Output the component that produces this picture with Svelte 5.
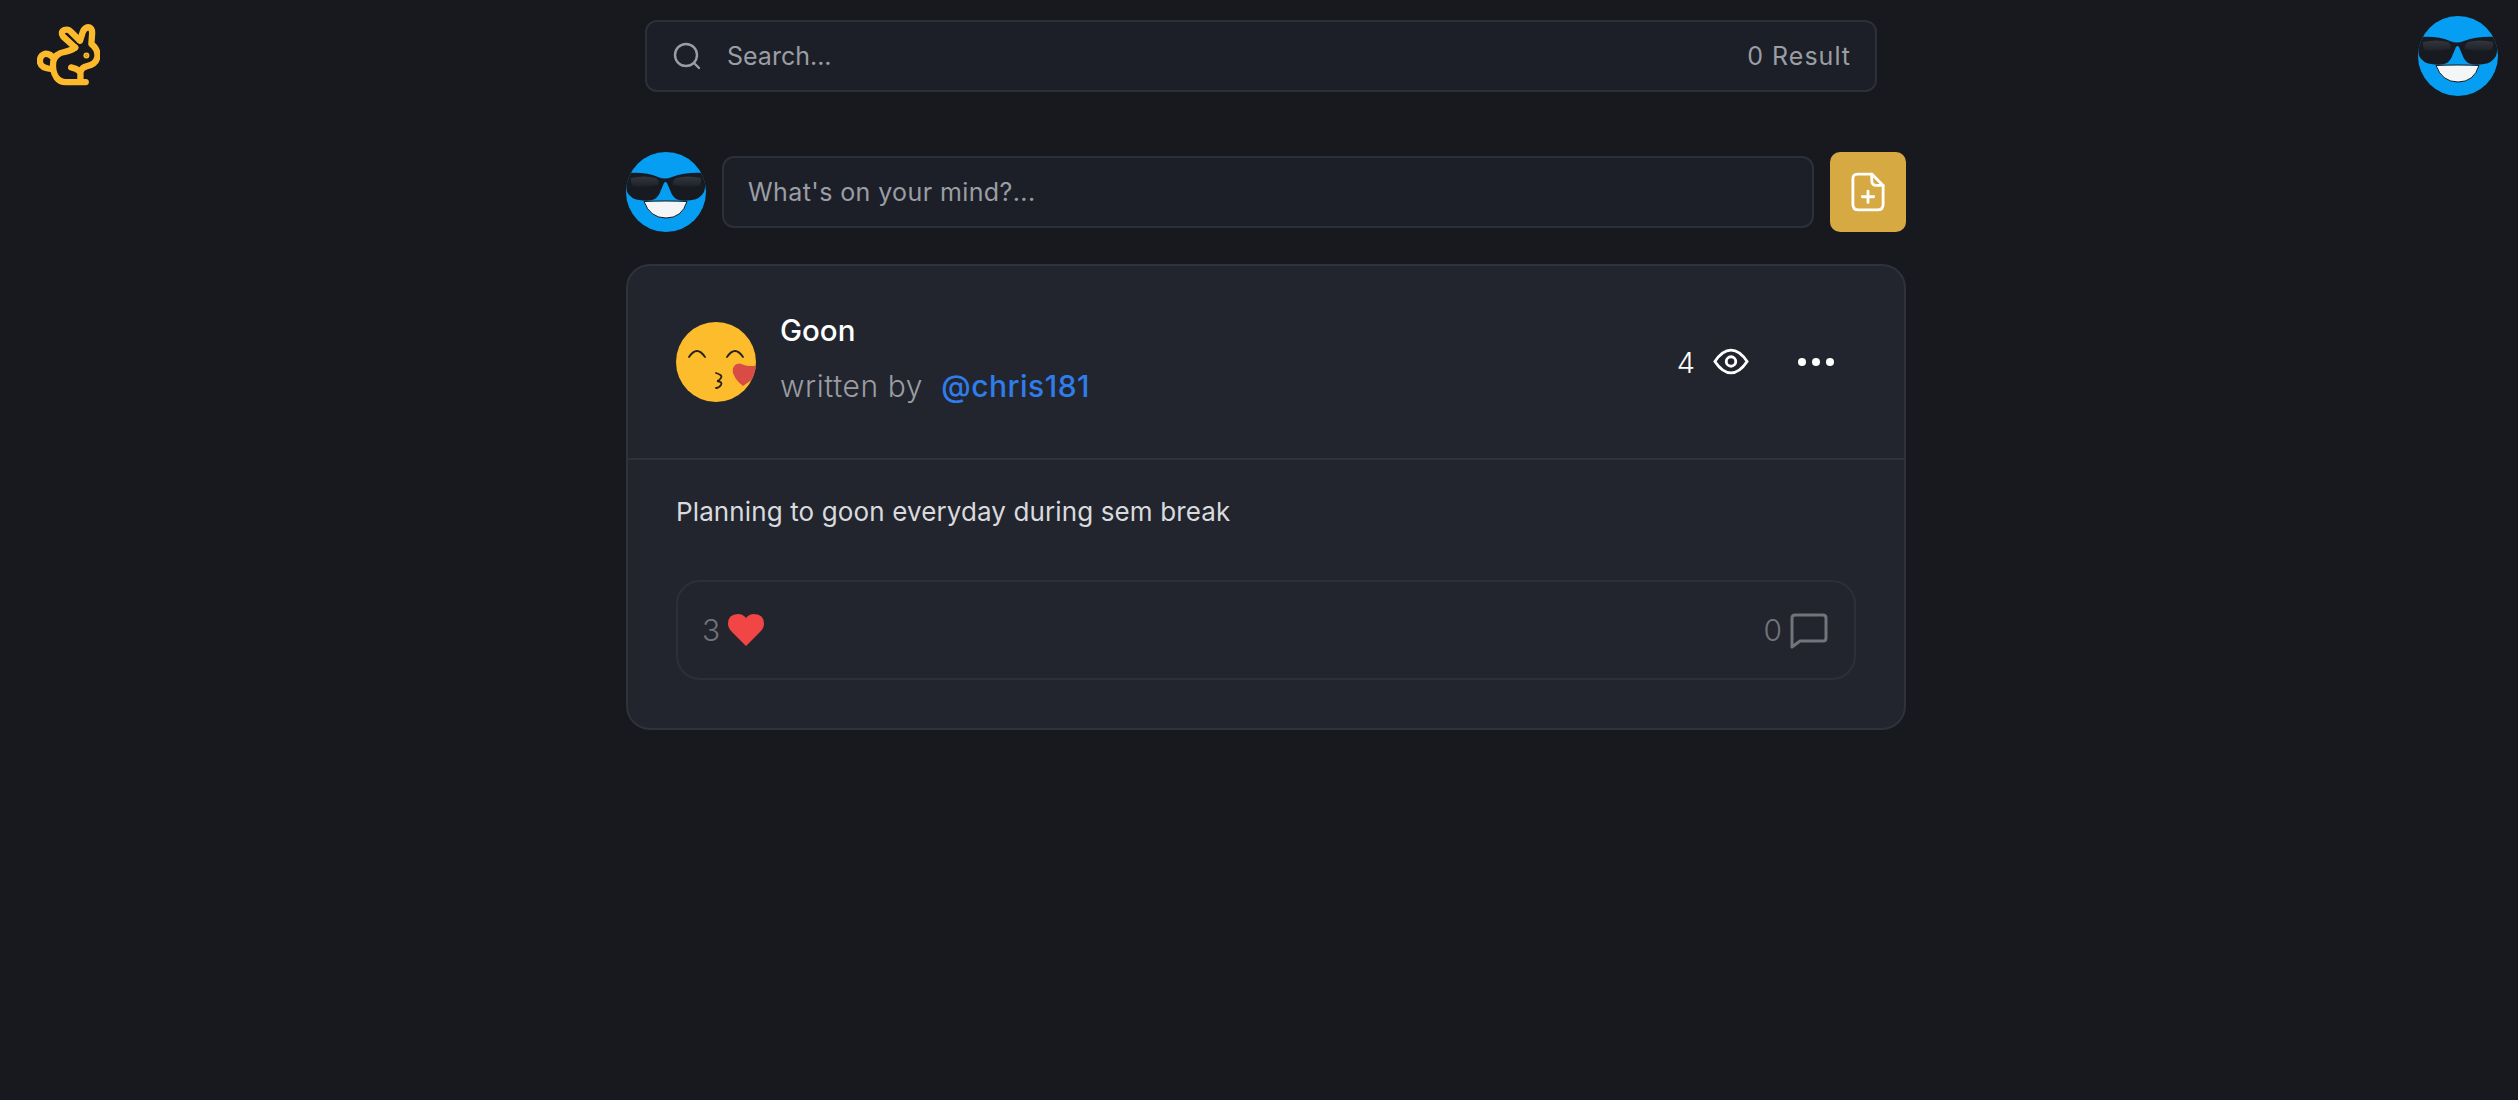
<script>
  const post = { title: 'Goon', author: '@chris181', views: 4, body: 'Planning to goon everyday during sem break', likes: 3, comments: 0 };
</script>

{#snippet cool(cls)}
  <svg class={cls} viewBox="0 0 80 80" aria-hidden="true">
    <defs>
      <clipPath id="c-{cls}"><circle cx="40" cy="40" r="40"/></clipPath>
      <linearGradient id="l-{cls}" x1="0" y1="0" x2="0" y2="1"><stop offset="0" stop-color="#33363d"/><stop offset="1" stop-color="#1e2127"/></linearGradient>
    </defs>
    <circle cx="40" cy="40" r="40" fill="#069ef2"/>
    <g clip-path="url(#c-{cls})">
      <path d="M3 21 Q20 20 32 25 Q39 28 46 25 Q60 20 77 21 L80 31 L78 40 Q74 47 66 48 Q56 50 50 47 Q46 44 44 38 L41 31 Q39.500 29 38 31 L35 38 Q33 44 29 47 Q23 50 13 48 Q5 47 1 40 L0 31 Z" fill="#171a20"/>
      <path d="M5 26 Q18 23 30 26 Q34 29 32 33 Q20 36 7 34 Q4 30 5 26Z" fill="url(#l-{cls})"/>
      <path d="M75 26 Q62 23 50 26 Q46 29 47 33 Q60 36 73 34 Q76 30 75 26Z" fill="url(#l-{cls})"/>
      <path d="M18 49.500 Q28 49 40 49 Q52 49 61 49.500 Q56 66 40 66 Q24 66 18 49.500Z" fill="#f4f5f7" stroke="#171a20" stroke-width="1"/>
    </g>
  </svg>
{/snippet}

<div class="page">
  <header class="top">
    <svg class="logo" viewBox="111 72 190 190" fill="none" stroke="#fdb92c" stroke-width="19" stroke-linecap="round" stroke-linejoin="round" aria-hidden="true">
      <path d="M226 143 L190 110 Q180 96 194 90 Q205 86 214 96 L240 122"/>
      <path d="M241 122 L249 96 Q256 80 268 82 Q279 86 277 104 L275 132 Q296 148 293 172 Q289 194 262 199 Q246 202 242 216 L242 246"/>
      <path d="M214 203 Q230 206 241 216"/>
      <path d="M226 143 Q212 154 195 156 Q166 160 160 186 Q156 214 170 234 Q180 247 198 247 L258 247"/>
      <path d="M162 178 Q152 160 134 162 Q118 168 120 188 Q124 206 156 208"/>
      <circle cx="260" cy="167" r="3" fill="#fdb92c" stroke-width="12"/>
    </svg>
    <label class="search">
      <svg class="search-icon" viewBox="0 0 28 28" fill="none" stroke="currentColor" stroke-width="2.400" stroke-linecap="round"><circle cx="13" cy="13" r="11"/><path d="M21 21l5 5"/></svg>
      <span class="grow">Search...</span>
      <span class="count">0 Result</span>
    </label>
    {@render cool('me')}
  </header>

  <main class="feed">
    <div class="composer">
      {@render cool('mine')}
      <div class="mind">What's on your mind?...</div>
      <button class="new" aria-label="New post">
        <svg viewBox="0 0 36 42" fill="none" stroke="#fff" stroke-width="3" stroke-linejoin="round" stroke-linecap="round"><path d="M7 2 H22 L34 14 V34 Q34 40 28 40 H8 Q2 40 2 34 V7 Q2 2 7 2Z"/><path d="M22 2 V9 Q22 14 27 14 H34"/><path d="M18 20 V32 M12 26 H24"/></svg>
      </button>
    </div>

    <article class="card">
      <div class="head">
        <svg class="kiss" viewBox="0 0 80 80" aria-hidden="true">
          <defs><clipPath id="k"><circle cx="40" cy="40" r="40"/></clipPath></defs>
          <circle cx="40" cy="40" r="40" fill="#fdbc2c"/>
          <path d="M13 35 Q21 23 29 35 M51 35 Q59 23 67 35" fill="none" stroke="#23221c" stroke-width="1.800" stroke-linecap="round"/>
          <path d="M40 51 Q47 53 45 56 Q43 59 41 59 Q47 60 45 63 Q43 66 40 66" fill="none" stroke="#23221c" stroke-width="1.800" stroke-linecap="round"/>
          <path clip-path="url(#k)" d="M82 43 Q73 45 68 43 Q63 40 59 43 Q56 46 57 51 Q60 59 67 64 Q75 59 82 52 Z" fill="#d94b45"/>
        </svg>
        <div class="who">
          <div class="name">{post.title}</div>
          <div class="by">written by <a href="#top">{post.author}</a></div>
        </div>
        <div class="views">
          <span>{post.views}</span>
          <svg viewBox="0 0 38 28" fill="none" stroke="#fff" stroke-width="3"><path d="M2 14 Q10 2 19 2 Q28 2 36 14 Q28 26 19 26 Q10 26 2 14Z"/><circle cx="19" cy="14" r="5"/></svg>
        </div>
        <div class="more" aria-hidden="true"><i></i><i></i><i></i></div>
      </div>
      <div class="content">
        <p>{post.body}</p>
        <div class="stats">
          <div class="stat">
            <span>{post.likes}</span>
            <svg class="heart" viewBox="0 0 36 32"><path d="M18 32 L4 18 Q0 14 0 10 Q0 0 10 0 Q15 0 18 4 Q21 0 26 0 Q36 0 36 10 Q36 14 32 18Z" fill="#f24545"/></svg>
          </div>
          <div class="stat">
            <span>{post.comments}</span>
            <svg class="bubble" viewBox="0 0 38 36" fill="none" stroke="#71747b" stroke-width="3" stroke-linejoin="round"><path d="M5 2 H33 Q36 2 36 5 V25 Q36 28 33 28 H10 L2 34 V5 Q2 2 5 2Z"/></svg>
          </div>
        </div>
      </div>
    </article>
  </main>
</div>

<style>
  :global(body) { margin: 0; background: #17191e; }
  .page { min-height: 1100px; background: #17191e; font-family: Inter, "Noto Sans", sans-serif; position: relative; }
  .top { height: 112px; display: flex; justify-content: center; align-items: flex-start; position: relative; }
  .logo { position: absolute; left: 37px; top: 24px; width: 63px; height: 63px; }
  .me { position: absolute; left: 2418px; top: 16px; width: 80px; height: 80px; }
  .search { margin-top: 20px; margin-left: 4px; width: 1232px; height: 72px; box-sizing: border-box; background: #1c1f27; border: 2px solid #2c3039; border-radius: 12px; display: flex; align-items: center; padding: 0 24px 0 26px; color: #9a9da4; font-size: 25px; }
  .search-icon { width: 28px; height: 28px; margin-right: 26px; }
  .grow { flex: 1; }
  .count { letter-spacing: 1px; }
  .feed { width: 1280px; margin: 40px 0 0 626px; }
  .composer { display: flex; align-items: center; gap: 16px; height: 80px; margin-bottom: 32px; }
  .mine { width: 80px; height: 80px; flex: none; }
  .mind { flex: 1; height: 72px; box-sizing: border-box; background: #1c1f27; border: 2px solid #2c3039; border-radius: 12px; display: flex; align-items: center; padding: 0 24px; color: #9a9da4; font-size: 25px; letter-spacing: 0.4px; }
  .new { width: 76px; height: 80px; border: 0; background: #d6a943; border-radius: 10px; display: flex; align-items: center; justify-content: center; padding: 0; }
  .new svg { width: 34px; height: 40px; }
  .card { box-sizing: border-box; height: 466px; background: #22252d; border: 2px solid #2e323b; border-radius: 24px; }
  .head { height: 194px; box-sizing: border-box; border-bottom: 2px solid #2e323b; display: flex; align-items: center; padding: 0 70px 0 48px; }
  .kiss { width: 80px; height: 80px; margin-right: 24px; flex: none; }
  .who { flex: 1; margin-top: -7px; }
  .name { color: #fff; font-size: 29.500px; font-weight: 500; line-height: 36px; }
  .by { color: #9a9da4; font-size: 30px; font-weight: 300; line-height: 40px; margin-top: 18px; letter-spacing: 0.6px; }
  .by a { color: #2f7deb; text-decoration: none; font-weight: 500; margin-left: 9px; letter-spacing: 0.5px; }
  .views { color: #fff; font-size: 29px; font-weight: 300; display: flex; align-items: center; gap: 18px; margin-right: 49px; }
  .views svg { width: 36px; height: 27px; margin-top: -1px; }
  .more { display: flex; gap: 6px; }
  .more i { width: 8px; height: 8px; border-radius: 50%; background: #fff; display: block; }
  .content { padding: 0 48px; }
  p { margin: 0; padding-top: 34px; color: #d9dade; font-size: 26px; line-height: 36px; letter-spacing: 0.12px; }
  .stats { box-sizing: border-box; margin-top: 50px; height: 100px; border: 2px solid #2c3039; border-radius: 24px; display: flex; justify-content: space-between; align-items: center; padding: 0 26px 0 24px; color: #71747b; font-size: 30px; font-weight: 300; }
  .stat { display: flex; align-items: center; gap: 8px; }
  .heart { width: 36px; height: 32px; }
  .bubble { width: 38px; height: 36px; margin-top: 2px; }
</style>
